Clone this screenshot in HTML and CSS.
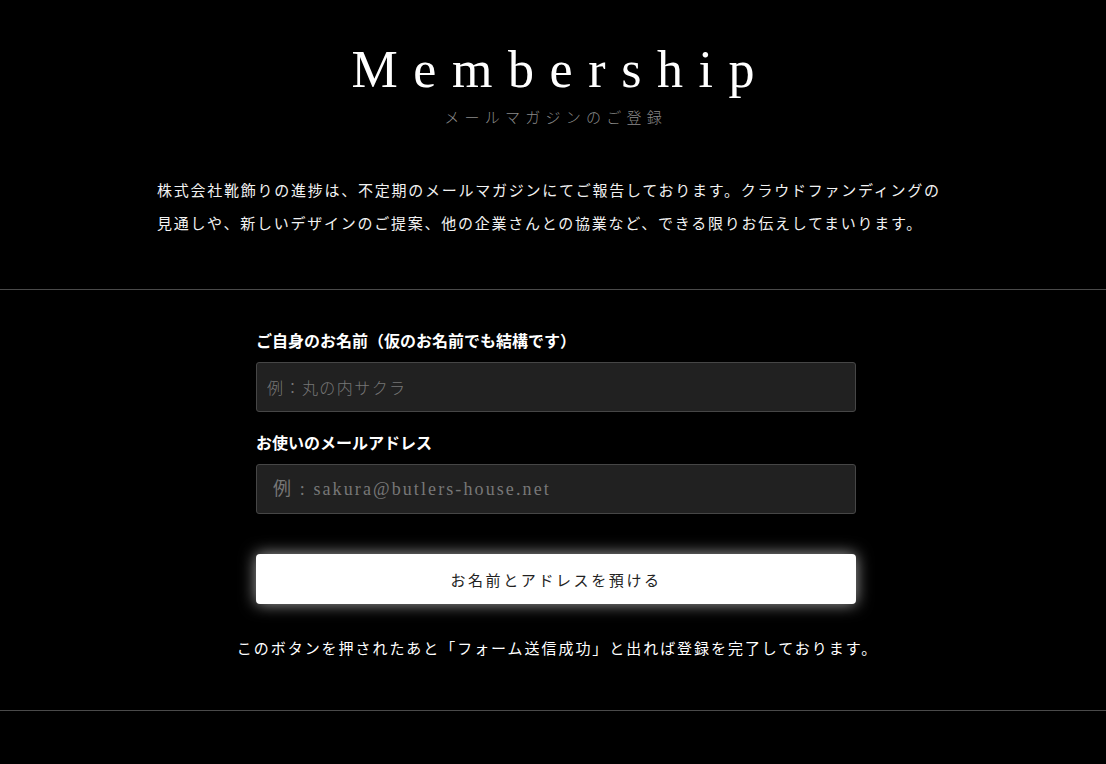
FILE: index.html
```html
<!DOCTYPE html>
<html lang="ja">
<head>
<meta charset="utf-8">
<title>Membership</title>
<link rel="stylesheet" href="styles.css">
</head>
<body>
<section class="intro">
  <h1 class="title">Membership</h1>
  <p class="subtitle">メールマガジンのご登録</p>
  <p class="lead">株式会社靴飾りの進捗は、不定期のメールマガジンにてご報告しております。クラウドファンディングの見通しや、新しいデザインのご提案、他の企業さんとの協業など、できる限りお伝えしてまいります。</p>
</section>
<section class="signup">
  <form class="form">
    <label class="label" for="name">ご自身のお名前（仮のお名前でも結構です）</label>
    <input class="field field-name" id="name" type="text" placeholder="例：丸の内サクラ">
    <label class="label label-mail" for="mail">お使いのメールアドレス</label>
    <input class="field field-mail" id="mail" type="email" placeholder="例 : sakura@butlers-house.net">
    <button class="submit" type="button">お名前とアドレスを預ける</button>
  </form>
  <p class="note">このボタンを押されたあと「フォーム送信成功」と出れば登録を完了しております。</p>
</section>
</body>
</html>
```
FILE: styles.css
```css
html, body {
  margin: 0;
  padding: 0;
  background: #000;
}
body {
  font-family: "Liberation Serif", "Noto Sans CJK JP", serif;
  color: #fff;
}
.intro {
  padding: 44px 0 50px;
  border-bottom: 1px solid #4a4a4a;
  text-align: center;
}
.title {
  margin: 0;
  font-size: 52px;
  line-height: 52px;
  font-weight: 400;
  letter-spacing: 0.3em;
  padding-left: 0.3em;
  color: #fff;
}
.subtitle {
  margin: 13px 0 0;
  font-family: "Noto Sans CJK JP", sans-serif;
  font-size: 15px;
  line-height: 16px;
  letter-spacing: 0.35em;
  padding-left: 0.35em;
  color: #8a8a8a;
  font-weight: 300;
}
.lead {
  width: 792px;
  margin: 48px auto 0;
  text-align: left;
  font-family: "Noto Sans CJK JP", sans-serif;
  font-size: 15px;
  line-height: 33px;
  letter-spacing: 1.75px;
  color: #f2f2f2;
  font-weight: 400;
}
.signup {
  padding: 38px 0 50px;
  border-bottom: 1px solid #4a4a4a;
}
.form {
  width: 600px;
  padding-left: 6px;
  margin: 0 auto;
  display: flex;
  flex-direction: column;
}
.label {
  font-family: "Noto Sans CJK JP", sans-serif;
  font-size: 16px;
  line-height: 24px;
  font-weight: 700;
  color: #fff;
}
.label-mail {
  margin-top: 18px;
}
.field {
  margin-top: 10px;
  box-sizing: border-box;
  height: 50px;
  width: 100%;
  background: #212121;
  border: 1px solid #464646;
  border-radius: 3px;
  color: #ddd;
  outline: none;
}
.field::placeholder {
  color: #777;
}
.field-name {
  padding: 0 10px;
  font-family: "Noto Sans CJK JP", sans-serif;
  font-size: 16px;
  letter-spacing: 0.09em;
  font-weight: 300;
}
.field-mail {
  padding: 0 16px;
  font-family: "Liberation Serif", "Noto Sans CJK JP", serif;
  font-size: 18px;
  letter-spacing: 2.1px;
}
.submit {
  margin-top: 40px;
  height: 50px;
  width: 100%;
  border: none;
  border-radius: 4px;
  background: #fff;
  color: #222;
  font-family: "Noto Sans CJK JP", sans-serif;
  font-size: 15px;
  letter-spacing: 2.6px;
  font-weight: 400;
  box-shadow: 0 0 16px rgba(255, 255, 255, 0.65);
  cursor: pointer;
}
.note {
  margin: 32px 0 0;
  padding-left: 9px;
  text-align: center;
  font-family: "Noto Sans CJK JP", sans-serif;
  font-size: 15px;
  line-height: 24px;
  letter-spacing: 1.95px;
  color: #fff;
  font-weight: 400;
}
```
